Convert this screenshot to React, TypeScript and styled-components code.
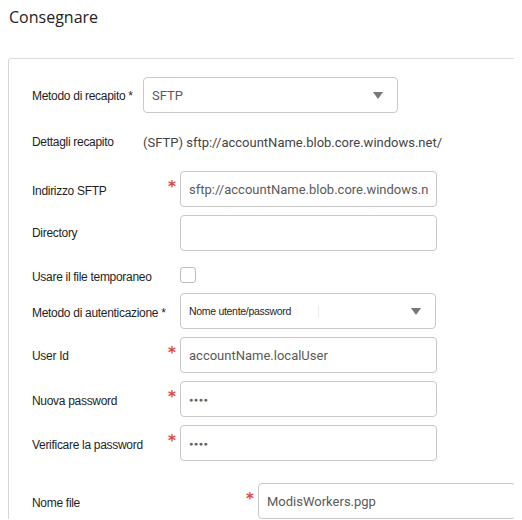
import React from "react";
import styled, { createGlobalStyle } from "styled-components";

let GlobalStyle = createGlobalStyle`
  body {
    margin: 0;
    background: #ffffff;
    font-family: "Liberation Sans", Arial, sans-serif;
  }
`;

let Page = styled.div`
  padding: 6px 0 0 8px;
  width: 514px;
  height: 520px;
  overflow: hidden;
  box-sizing: border-box;
`;

let Title = styled.h2`
  margin: 0 0 0 1px;
  font-family: "Open Sans", sans-serif;
  font-size: 16px;
  font-weight: 400;
  color: #222;
  line-height: 22px;
`;

let Panel = styled.div`
  margin-top: 30px;
  border-top: 1px solid #dcdcdc;
  border-left: 1px solid #d6d6d6;
  border-top-left-radius: 3px;
  padding: 18px 0 0 23px;
  display: flex;
  flex-direction: column;
`;

let Row = styled.div<{ $space: number; $labelWidth: number }>`
  display: grid;
  grid-template-columns: ${(p) => p.$labelWidth}px auto;
  align-items: center;
  height: 36px;
  margin-top: ${(p) => p.$space}px;
`;

let Label = styled.span<{ $drop?: number }>`
  font-size: 12px;
  color: #1e1e1e;
  letter-spacing: -0.3px;
  white-space: nowrap;
  padding-top: ${(p) => p.$drop ?? 0}px;
`;

let FieldCell = styled.div`
  display: flex;
  align-items: center;
`;

let Required = styled.span`
  width: 8px;
  margin-left: -4px;
  margin-right: 4px;
  align-self: flex-start;
  padding-top: 9px;
  color: #e0463c;
  font-family: "DejaVu Sans", sans-serif;
  font-size: 15px;
  font-weight: 700;
  line-height: 1;
  text-align: center;
`;

let Box = styled.div<{ $width: number }>`
  width: ${(p) => p.$width}px;
  height: 36px;
  box-sizing: border-box;
  border: 1px solid #c9c9c9;
  border-radius: 4px;
  display: flex;
  align-items: center;
  padding: 0 8px;
  white-space: nowrap;
  overflow: hidden;
`;

let BoxText = styled.span<{ $small?: boolean }>`
  flex: 1;
  overflow: hidden;
  font-family: ${(p) => (p.$small ? '"Liberation Sans", sans-serif' : "Roboto, sans-serif")};
  font-size: ${(p) => (p.$small ? "10.5px" : "13px")};
  color: ${(p) => (p.$small ? "#1e1e1e" : "#5a5a5a")};
  letter-spacing: ${(p) => (p.$small ? "-0.3px" : "0")};
`;

let Dots = styled.span`
  font-family: "Liberation Sans", sans-serif;
  font-size: 7px;
  letter-spacing: 0.6px;
  color: #666;
`;

let Separator = styled.span`
  width: 1px;
  height: 13px;
  background: #ececec;
  margin-right: 92px;
`;

let Arrow = styled.span`
  width: 0;
  height: 0;
  border-left: 5px solid transparent;
  border-right: 5px solid transparent;
  border-top: 7px solid #777;
  margin-right: 6px;
`;

let Details = styled.span`
  font-family: Roboto, sans-serif;
  font-size: 13px;
  color: #444;
  white-space: nowrap;
  padding-top: 2px;
`;

let Checkbox = styled.span`
  width: 16px;
  height: 16px;
  box-sizing: border-box;
  border: 1px solid #bdbdbd;
  border-radius: 3px;
`;

let Spacer = styled.span`
  width: 8px;
`;

let App: React.FC = () => {
  return (
    <Page>
      <GlobalStyle />
      <Title>Consegnare</Title>
      <Panel>
        <Row $space={0} $labelWidth={111}>
          <Label $drop={2}>Metodo di recapito *</Label>
          <Box $width={255}>
            <BoxText>SFTP</BoxText>
            <Arrow />
          </Box>
        </Row>
        <Row $space={10} $labelWidth={111}>
          <Label $drop={2}>Dettagli recapito</Label>
          <Details>(SFTP) sftp://accountName.blob.core.windows.net/</Details>
        </Row>
        <Row $space={12} $labelWidth={140}>
          <Label $drop={4}>Indirizzo SFTP</Label>
          <FieldCell>
            <Required>*</Required>
            <Box $width={257}>
              <BoxText>sftp://accountName.blob.core.windows.net/</BoxText>
            </Box>
          </FieldCell>
        </Row>
        <Row $space={8} $labelWidth={140}>
          <Label>Directory</Label>
          <FieldCell>
            <Spacer />
            <Box $width={257} />
          </FieldCell>
        </Row>
        <Row $space={6} $labelWidth={140}>
          <Label $drop={4}>Usare il file temporaneo</Label>
          <FieldCell>
            <Spacer />
            <Checkbox />
          </FieldCell>
        </Row>
        <Row $space={0} $labelWidth={140}>
          <Label $drop={4}>Metodo di autenticazione *</Label>
          <FieldCell>
            <Spacer />
            <Box $width={256}>
              <BoxText $small>Nome utente/password</BoxText>
              <Separator />
              <Arrow />
            </Box>
          </FieldCell>
        </Row>
        <Row $space={8} $labelWidth={140}>
          <Label $drop={2}>User Id</Label>
          <FieldCell>
            <Required>*</Required>
            <Box $width={257}>
              <BoxText>accountName.localUser</BoxText>
            </Box>
          </FieldCell>
        </Row>
        <Row $space={8} $labelWidth={140}>
          <Label $drop={3}>Nuova password</Label>
          <FieldCell>
            <Required>*</Required>
            <Box $width={257}>
              <Dots>●●●●</Dots>
            </Box>
          </FieldCell>
        </Row>
        <Row $space={8} $labelWidth={140}>
          <Label $drop={4}>Verificare la password</Label>
          <FieldCell>
            <Required>*</Required>
            <Box $width={257}>
              <Dots>●●●●</Dots>
            </Box>
          </FieldCell>
        </Row>
        <Row $space={22} $labelWidth={218}>
          <Label $drop={4}>Nome file</Label>
          <FieldCell>
            <Required>*</Required>
            <Box $width={258}>
              <BoxText>ModisWorkers.pgp</BoxText>
            </Box>
          </FieldCell>
        </Row>
      </Panel>
    </Page>
  );
};

export default App;
